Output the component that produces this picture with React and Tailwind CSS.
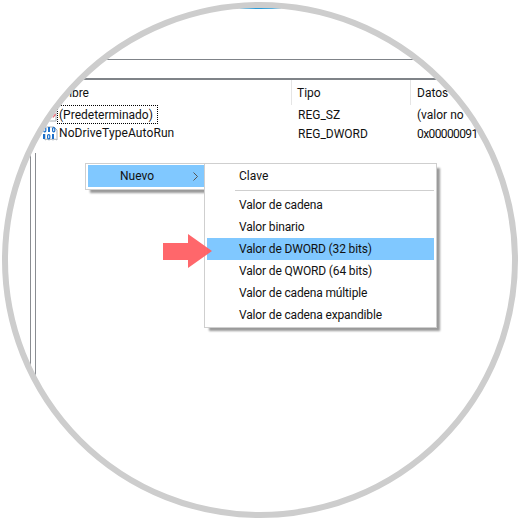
const menuItems = [
  { label: "Valor de cadena" },
  { label: "Valor binario" },
  { label: "Valor de DWORD (32 bits)", active: true },
  { label: "Valor de QWORD (64 bits)" },
  { label: "Valor de cadena múltiple" },
  { label: "Valor de cadena expandible" },
];

function StringIcon() {
  return (
    <svg width="15" height="15" viewBox="0 0 15 15" className="shrink-0 mt-[2px]">
      <path d="M1 1h10l3 3v10H1z" fill="#fff" stroke="#a9b0b6" />
      <path d="M10 9l3-3 1 2-3 3z" fill="#e8707a" />
    </svg>
  );
}

function RegIcon() {
  return (
    <svg width="16" height="15" viewBox="0 0 16 15" className="shrink-0">
      <path d="M4 1h8l3 3v10l-2-1-2 1-2-1-2 1-2-1-2 1V8" fill="#fff" stroke="#a9b0b6" />
      <g fill="none" stroke="#1b6fc9" strokeWidth="1.2">
        <rect x="1.6" y="1.6" width="2.2" height="4.2" rx="1" />
        <rect x="10.6" y="1.6" width="2.2" height="4.2" rx="1" />
        <rect x="5.6" y="8.6" width="2.2" height="4.2" rx="1" />
      </g>
      <g fill="#1b6fc9">
        <rect x="6" y="1" width="2" height="5" />
        <rect x="1" y="8" width="2" height="5" />
        <rect x="10" y="8" width="2" height="5" />
      </g>
    </svg>
  );
}

function Arrow() {
  return (
    <svg width="49" height="34" viewBox="0 0 49 34" className="absolute left-[-44px] top-[-4px]">
      <path d="M0 9h25V0l24 17-24 17V26H0z" fill="#ff5f63" fillOpacity="0.95" />
    </svg>
  );
}

export default function App() {
  return (
    <div className="w-[520px] h-[520px] bg-white p-[2px] font-['Roboto',sans-serif] text-[12px] text-[#111]">
      <div className="w-[516px] h-[516px] rounded-full border-[6px] border-[#cdcdcd] overflow-hidden bg-white">
        <div className="flex flex-col w-[504px] h-[504px]">
          <div className="h-px bg-[#2a9ad6] shrink-0" />
          <div className="h-[50px] shrink-0" />
          <div className="h-px bg-[#7f8388] shrink-0" />
          <div className="h-[18px] shrink-0" />
          <div className="h-[2px] bg-[#7f8388] shrink-0" />

          <div className="flex h-[25px] shrink-0 leading-[26px]">
            <div className="w-[284px] pl-[38px] border-r border-[#e5e5e5]">Nombre</div>
            <div className="w-[119px] pl-[5px] border-r border-[#e5e5e5]">Tipo</div>
            <div className="pl-[6px]">Datos</div>
          </div>

          <div className="flex h-[19px] shrink-0 leading-[21px]">
            <div className="w-[284px] pl-[34px] flex">
              <StringIcon />
              <span className="inline-block h-[19px] pl-[2px] pr-[5px] outline-1 outline-dotted outline-black -outline-offset-1">(Predeterminado)</span>
            </div>
            <div className="w-[119px] pl-[6px]">REG_SZ</div>
            <div className="pl-[6px]">(valor no</div>
          </div>

          <div className="flex h-[19px] shrink-0 leading-[21px]">
            <div className="w-[284px] pl-[34px] flex items-center gap-[1px]">
              <RegIcon />
              <span className="tracking-[0.1px]">NoDriveTypeAutoRun</span>
            </div>
            <div className="w-[119px] pl-[6px]">REG_DWORD</div>
            <div className="pl-[6px] tracking-[-0.6px]">0x00000091</div>
          </div>

          <div className="flex flex-1 min-h-0">
            <div className="h-[260px] shrink-0 mt-[10px] ml-[22px] w-[6px] border-x border-[#8a8d92]" />

            <div className="flex items-start mt-[20px] ml-[49px]">
              <div className="w-[119px] h-[27px] border border-[#cfcfcf] border-r-0 pl-[2px] pt-px bg-white shadow-[4px_4px_2px_-1px_#9a9a9a]">
                <div className="flex items-center h-[22px] bg-[#80c8ff] pl-[32px] pr-[6px] justify-between">
                  <span>Nuevo</span>
                  <svg width="5" height="9" viewBox="0 0 5 9" fill="none" stroke="#555" strokeWidth="1">
                    <path d="M0.5 0.5l4 4-4 4" />
                  </svg>
                </div>
              </div>

              <div className="w-[233px] h-[165px] border border-[#cfcfcf] bg-white px-[2px] pt-px shadow-[4px_4px_2px_-1px_#9a9a9a]">
                <div className="h-[22px] pl-[32px] leading-[22px]">Clave</div>
                <div className="h-px ml-[28px] bg-[#cfcfcf] my-[3px]" />
                {menuItems.map((item) => (
                  <div
                    key={item.label}
                    className={`relative h-[22px] pl-[32px] leading-[22px] tracking-[-0.15px] ${item.active ? "bg-[#80c8ff]" : ""}`}
                  >
                    {item.active && <Arrow />}
                    <span className="relative">{item.label}</span>
                  </div>
                ))}
              </div>
            </div>
          </div>
        </div>
      </div>
    </div>
  );
}
